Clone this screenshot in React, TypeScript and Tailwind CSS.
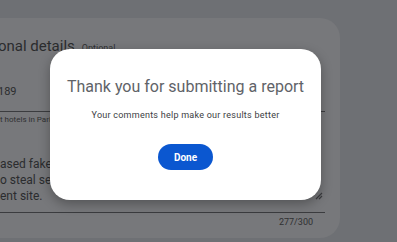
import React from "react";

const lines = ["ased fake hotel booking pages", "o steal sensitive payment details", "ent site."];

export default function App() {
  return (
    <div className="relative w-[397px] h-[242px] overflow-hidden bg-[#6e7074] font-['Roboto',sans-serif]">
      {/* Report form behind the dialog */}
      <div className="pt-[18px]">
        <div className="ml-[-100px] w-[440px] h-[220px] rounded-[20px] bg-[#77787b] pl-[100px] pr-[15px] pt-[18px]">
          <div className="flex items-baseline gap-[7px] ml-[-41px]">
            <h2 className="text-[15px] leading-[20px] text-[#2b2c2e]">Additional details</h2>
            <span className="text-[9px] text-[#2f3032]">Optional</span>
          </div>

          <div className="mt-[28px] ml-[-2px] border-b border-[#3b3c3f] pb-[11px] text-[11px] leading-[16px] text-[#2b2c2e]">
            189
          </div>
          <div className="mt-[3px] text-[8px] leading-[10px] text-[#2f3032]">t hotels in Paris</div>

          <div className="relative mt-[31px] border-b border-[#3b3c3f] pb-[8px] text-[12px] leading-[16px] text-[#2b2c2e]">
            {lines.map((l) => (
              <div key={l}>{l}</div>
            ))}
            <svg className="absolute right-[2px] bottom-[12px]" width="8" height="8" viewBox="0 0 8 8">
              <path d="M7 1 L1 7 M7 4 L4 7" stroke="#3b3c3f" strokeWidth="1.2" />
            </svg>
          </div>
          <div className="mt-[3px] pr-[12px] text-right text-[9px] leading-[12px] text-[#2f3032]">277/300</div>
        </div>
      </div>

      {/* Dialog */}
      <div className="absolute left-[50px] top-[49px] w-[271px] h-[151px] rounded-[20px] bg-white shadow-[0_4px_12px_rgba(0,0,0,0.3)] flex flex-col items-center">
        <h1 className="mt-[28px] text-[16px] leading-[20px] text-[#5f6368]">Thank you for submitting a report</h1>
        <p className="mt-[12px] text-[9px] leading-[12px] tracking-[0.25px] text-[#3c4043]">
          Your comments help make our results better
        </p>
        <button className="mt-[23px] w-[55px] h-[26px] rounded-full bg-[#0b57d0] text-white text-[10px] font-bold">
          Done
        </button>
      </div>
    </div>
  );
}
